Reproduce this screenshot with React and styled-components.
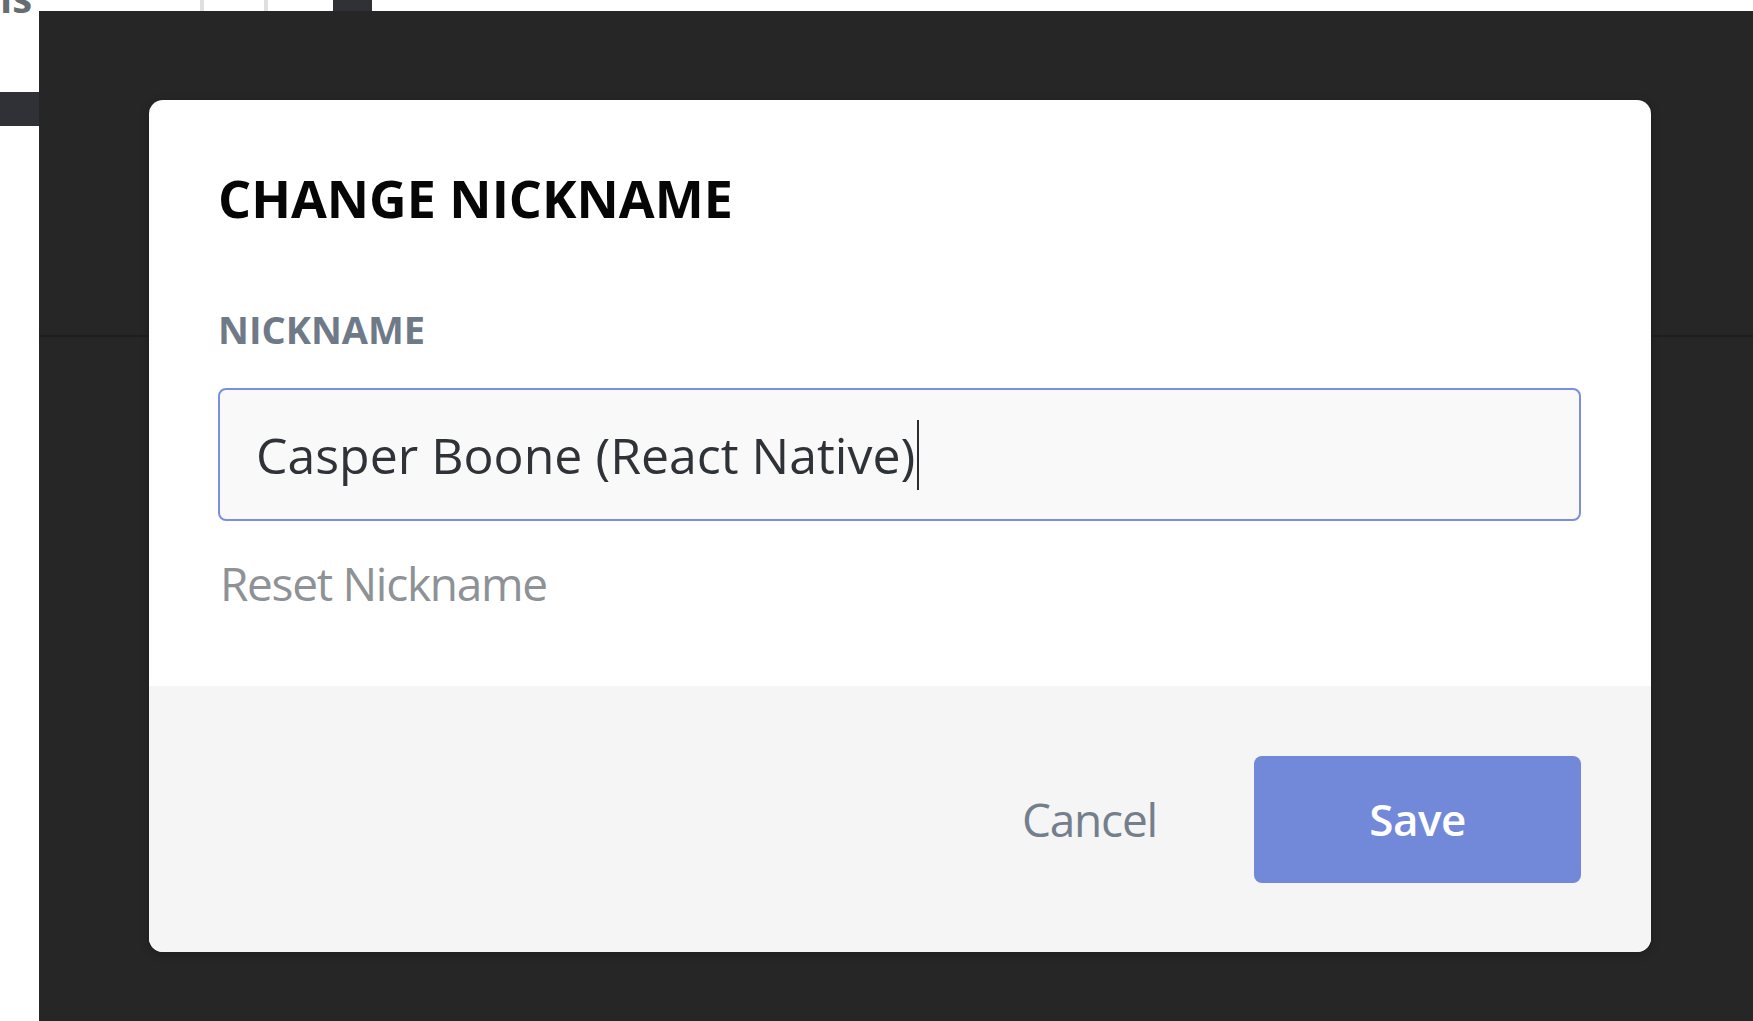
import React from "react";
import styled, { createGlobalStyle } from "styled-components";

const GlobalStyle = createGlobalStyle`
  html, body, #root {
    margin: 0;
    padding: 0;
    width: 100%;
    height: 100%;
  }
  body {
    background: #ffffff;
    font-family: "Open Sans", "Noto Sans", "Liberation Sans", sans-serif;
    overflow: hidden;
  }
  * {
    box-sizing: border-box;
  }
`;

const Screen = styled.div`
  position: relative;
  width: 100%;
  height: 100%;
  overflow: hidden;
  background: #ffffff;
`;

/* ---------- app content sitting under the dialog ---------- */

const AppShell = styled.div`
  display: grid;
  grid-template-columns: 39px 1fr;
  height: 100%;
`;

const SideRail = styled.aside`
  display: flex;
  flex-direction: column;
  overflow: hidden;
`;

const CutLabel = styled.span`
  display: block;
  margin-top: -22px;
  height: 40px;
  font: 700 40px/40px "Open Sans", sans-serif;
  color: #676b72;
  text-align: right;
  padding-right: 11px;
  white-space: nowrap;
`;

const RailTab = styled.div`
  margin-top: 74px;
  height: 34px;
  background: #2f3136;
`;

const MainArea = styled.main`
  display: flex;
  flex-direction: column;
`;

const Toolbar = styled.div`
  display: flex;
  align-items: stretch;
  height: 11px;
`;

const ToolTick = styled.span`
  width: 4px;
  margin-left: ${(p) => p.$offset}px;
  background: #dedfe1;
`;

const ToolBlock = styled.span`
  width: 39px;
  margin-left: ${(p) => p.$offset}px;
  background: #2f3136;
`;

const HeaderZone = styled.div`
  height: 326px;
  border-bottom: 2px solid #c9cacc;
`;

/* ---------- dialog ---------- */

const Overlay = styled.div`
  position: absolute;
  top: 11px;
  left: 39px;
  right: 0;
  bottom: 0;
  background: rgba(0, 0, 0, 0.85);
  padding: 89px 102px 0 110px;
`;

const Modal = styled.div`
  display: flex;
  flex-direction: column;
  background: #ffffff;
  border-radius: 14px;
  overflow: hidden;
  box-shadow: 0 0 0 1px rgba(32, 34, 37, 0.6), 0 2px 10px 0 rgba(0, 0, 0, 0.2);
`;

const Body = styled.div`
  display: flex;
  flex-direction: column;
  align-items: flex-start;
  padding: 72px 70px 80px 69px;
`;

const Title = styled.h2`
  margin: 0;
  font: 700 52px/52px "Open Sans", sans-serif;
  letter-spacing: 0;
  color: #060607;
`;

const FieldLabel = styled.label`
  margin-top: 86px;
  font: 700 38px/39px "Open Sans", sans-serif;
  color: #6f7a89;
`;

const Field = styled.div`
  align-self: stretch;
  margin-top: 39px;
  height: 133px;
  display: flex;
  align-items: center;
  padding: 0 36px;
  border: 2px solid #7a8fe0;
  border-radius: 8px;
  background: #f9f9f9;
`;

const FieldText = styled.span`
  font: 400 50px/50px "Open Sans", sans-serif;
  color: #2f3338;
  white-space: pre;
`;

const Caret = styled.span`
  width: 2px;
  height: 70px;
  margin-left: 2px;
  background: #2b2d31;
`;

const ResetLink = styled.a`
  margin-top: 39px;
  margin-left: 2px;
  font: 400 46px/46px "Open Sans", sans-serif;
  letter-spacing: -1.3px;
  color: #8e9297;
  text-decoration: none;
  cursor: pointer;
`;

const Footer = styled.div`
  height: 266px;
  display: flex;
  align-items: center;
  justify-content: flex-end;
  padding: 0 70px;
  background: #f5f5f5;
`;

const TextButton = styled.button`
  margin-right: 97px;
  padding: 0;
  border: none;
  background: none;
  font: 500 46px/46px "Open Sans", sans-serif;
  letter-spacing: -1.2px;
  color: #747f8d;
  cursor: pointer;
`;

const PrimaryButton = styled.button`
  width: 327px;
  height: 127px;
  border: none;
  border-radius: 8px;
  background: #7289da;
  color: #ffffff;
  font: 600 44px/44px "Open Sans", sans-serif;
  letter-spacing: -0.5px;
  cursor: pointer;
`;

export default function App() {
  return (
    <>
      <GlobalStyle />
      <Screen>
        <AppShell>
          <SideRail>
            <CutLabel>is</CutLabel>
            <RailTab />
          </SideRail>
          <MainArea>
            <Toolbar>
              <ToolTick $offset={161} />
              <ToolTick $offset={60} />
              <ToolBlock $offset={65} />
            </Toolbar>
            <HeaderZone />
          </MainArea>
        </AppShell>

        <Overlay>
          <Modal role="dialog" aria-label="Change Nickname">
            <Body>
              <Title>CHANGE NICKNAME</Title>
              <FieldLabel>NICKNAME</FieldLabel>
              <Field>
                <FieldText>Casper Boone (React Native)</FieldText>
                <Caret />
              </Field>
              <ResetLink>Reset Nickname</ResetLink>
            </Body>
            <Footer>
              <TextButton>Cancel</TextButton>
              <PrimaryButton>Save</PrimaryButton>
            </Footer>
          </Modal>
        </Overlay>
      </Screen>
    </>
  );
}
